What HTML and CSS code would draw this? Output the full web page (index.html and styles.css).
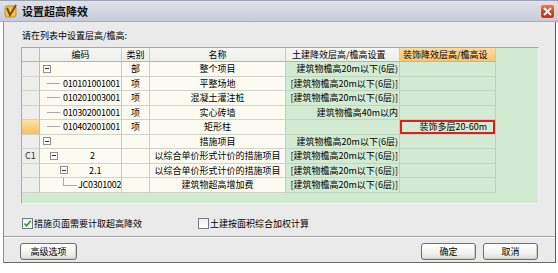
FILE: index.html
```html
<!DOCTYPE html>
<html>
<head>
<meta charset="utf-8">
<link rel="stylesheet" href="styles.css">
</head>
<body>
<div class="dialog">
  <div class="titlebar">
    <svg class="ticon" width="14" height="14" viewBox="0 0 14 14">
      <rect x="1" y="2" width="11" height="11" rx="2" fill="#f3c24a" stroke="#c98d1c"/>
      <path d="M3 4 L6 11 L12 1" fill="none" stroke="#7a4a12" stroke-width="2"/>
    </svg>
    <span class="ttext">设置超高降效</span>
    <span class="tspacer"></span>
    <span class="close">
      <svg width="9" height="9" viewBox="0 0 9 9"><path d="M1 1 L8 8 M8 1 L1 8" stroke="#fff" stroke-width="2"/></svg>
    </span>
  </div>
  <div class="content">
    <div class="label">请在列表中设置层高/檐高:</div>
    <div class="listbox">
      <div class="grid">
        <div class="c hd rh"></div>
        <div class="c hd ctr">编码</div>
        <div class="c hd ctr">类别</div>
        <div class="c hd ctr">名称</div>
        <div class="c hd gh">土建降效层高/檐高设置</div>
        <div class="c hd oh">装饰降效层高/檐高设</div>

        <div class="c rh"></div>
        <div class="c w tree"><span class="ind3"></span><span class="box"></span></div>
        <div class="c w ctr">部</div>
        <div class="c w ctr">整个项目</div>
        <div class="c g r">建筑物檐高20m以下(6层)</div>
        <div class="c g"></div>

        <div class="c rh"></div>
        <div class="c w tree"><span class="ind7"></span><span class="hl"></span><span class="code">010101001001</span></div>
        <div class="c w ctr">项</div>
        <div class="c w ctr">平整场地</div>
        <div class="c g r">[建筑物檐高20m以下(6层)]</div>
        <div class="c g"></div>

        <div class="c rh"></div>
        <div class="c w tree"><span class="ind7"></span><span class="hl"></span><span class="code">010201003001</span></div>
        <div class="c w ctr">项</div>
        <div class="c w ctr">混凝土灌注桩</div>
        <div class="c g r">[建筑物檐高20m以下(6层)]</div>
        <div class="c g"></div>

        <div class="c rh"></div>
        <div class="c w tree"><span class="ind7"></span><span class="hl"></span><span class="code">010302001001</span></div>
        <div class="c w ctr">项</div>
        <div class="c w ctr">实心砖墙</div>
        <div class="c g r">建筑物檐高40m以内</div>
        <div class="c g"></div>

        <div class="c rh sel"></div>
        <div class="c w tree"><span class="ind7"></span><span class="hl"></span><span class="code">010402001001</span></div>
        <div class="c w ctr">项</div>
        <div class="c w ctr">矩形柱</div>
        <div class="c g"></div>
        <div class="c g r redbox">装饰多层20-60m</div>

        <div class="c rh"></div>
        <div class="c w tree"><span class="ind3"></span><span class="box"></span></div>
        <div class="c w"></div>
        <div class="c w ctr">措施项目</div>
        <div class="c g r">建筑物檐高20m以下(6层)</div>
        <div class="c g"></div>

        <div class="c rh rtxt">C1</div>
        <div class="c w tree"><span class="ind10"></span><span class="box"></span><span class="t2">2</span></div>
        <div class="c w"></div>
        <div class="c w ctr">以综合单价形式计价的措施项目</div>
        <div class="c g r">[建筑物檐高20m以下(6层)]</div>
        <div class="c g"></div>

        <div class="c rh"></div>
        <div class="c w tree"><span class="ind20"></span><span class="box"></span><span class="t21">2.1</span></div>
        <div class="c w"></div>
        <div class="c w ctr">以综合单价形式计价的措施项目</div>
        <div class="c g r">[建筑物檐高20m以下(6层)]</div>
        <div class="c g"></div>

        <div class="c rh"></div>
        <div class="c w tree"><span class="ind23"></span><span class="corner"></span><span class="code">JC0301002</span></div>
        <div class="c w"></div>
        <div class="c w ctr">建筑物超高增加费</div>
        <div class="c g r">[建筑物檐高20m以下(6层)]</div>
        <div class="c g"></div>
      </div>
    </div>
    <div class="checks">
      <label class="chk chk1">
        <span class="cbox"><svg width="9" height="9" viewBox="0 0 9 9"><path d="M1.5 4.5 L3.5 6.8 L7.8 1.8" fill="none" stroke="#2a9a2a" stroke-width="1.6"/></svg></span>
        <span>措施页面需要计取超高降效</span>
      </label>
      <label class="chk">
        <span class="cbox"></span>
        <span>土建按面积综合加权计算</span>
      </label>
    </div>
    <div class="sep"></div>
    <div class="buttons">
      <span class="btn wide">高级选项</span>
      <span class="bspacer"></span>
      <span class="btn">确定</span>
      <span class="btn">取消</span>
    </div>
  </div>
</div>
</body>
</html>
```

FILE: styles.css
```css
html, body {
  margin: 0;
  padding: 0;
  background: #ffffff;
}
body {
  width: 558px;
  height: 273px;
  overflow: hidden;
  font-family: "Noto Sans CJK SC", "Noto Sans", sans-serif;
  font-size: 9px;
  color: #000;
}
.dialog {
  display: flex;
  flex-direction: column;
}
.titlebar {
  height: 22px;
  box-sizing: border-box;
  display: flex;
  align-items: center;
  padding: 0 2px 0 4px;
  background: linear-gradient(#dfe2ea, #d5d8e3 45%, #c6cad8);
  border-top: 1px solid #9ea2b0;
  border-bottom: 1px solid #a9adbb;
}
.ticon {
  flex: none;
  margin-right: 4px;
}
.ttext {
  font-size: 11px;
  font-weight: bold;
  color: #111;
  line-height: 12px;
}
.tspacer { flex: 1; }
.close {
  width: 15px;
  height: 15px;
  box-sizing: border-box;
  border: 1px solid #f2d2c8;
  border-radius: 3px;
  background: linear-gradient(#ea7a5c, #d2412a 55%, #c23220);
  display: flex;
  align-items: center;
  justify-content: center;
  margin-right: 1px;
}
.content {
  margin: 0 2px 0 3px;
  background: #ebeaea;
  border-left: 1px solid #8e8e8e;
  border-right: 1px solid #5a5a5a;
  border-bottom: 1px solid #6a6a6a;
  height: 241px;
  box-sizing: border-box;
  display: flex;
  flex-direction: column;
}
.label {
  padding: 8px 0 0 18px;
  line-height: 11px;
  height: 11px;
}
.listbox {
  margin: 6px 0 0 17px;
  width: 518px;
  height: 157px;
  box-sizing: border-box;
  border: 1px solid #a9a9a9;
  border-right-color: #f4f4f4;
  border-bottom-color: #f4f4f4;
  background: #d2ead2;
}
.grid {
  display: grid;
  grid-template-columns: 18px 82px 28px 136px 114px 96px;
  grid-template-rows: 14px;
  grid-auto-rows: 14.5px;
  width: 474px;
}
.c {
  box-sizing: border-box;
  border-right: 1px solid #c9c9c6;
  border-bottom: 1px solid #d2d2cc;
  display: flex;
  align-items: center;
  white-space: nowrap;
  overflow: hidden;
  line-height: 11px;
}
.ctr { justify-content: center; }
.r { justify-content: flex-end; padding-right: 1px; }
.hd {
  background: linear-gradient(#f7f7f5, #eeeeeb);
  border-bottom: 1px solid #b4b4b0;
}
.gh { padding-left: 6px; }
.oh {
  background: linear-gradient(#fddaa0, #f8c474);
  padding-left: 3px;
}
.rh {
  background: #ededeb;
  border-right: 1px solid #bdbdb9;
}
.rh.sel {
  background: linear-gradient(#fde1a4, #f8c05a);
}
.rtxt {
  padding-left: 3px;
  color: #333;
}
.w { background: #fbfbf2; }
.g {
  background: #d3ebd3;
  border-right: 1px solid #b9d3b9;
  border-bottom: 1px solid #bdd6bd;
}
.redbox {
  box-shadow: inset 0 0 0 2px #e31b1b;
  padding-right: 8px;
}
.tree { align-items: center; }
.ind3 { width: 3px; flex: none; }
.ind7 { width: 7px; flex: none; }
.ind10 { width: 10px; flex: none; }
.ind20 { width: 20px; flex: none; }
.ind23 { width: 23px; flex: none; align-self: stretch; }
.box {
  flex: none;
  width: 8px;
  height: 8px;
  box-sizing: border-box;
  border: 1px solid #8f8f8f;
  background: #ffffff;
  display: flex;
  align-items: center;
  justify-content: center;
}
.box::before {
  content: "";
  width: 4px;
  height: 1px;
  background: #333;
}
.hl {
  flex: none;
  width: 13px;
  height: 1px;
  background: #a8a8a8;
  margin-right: 3px;
}
.corner {
  flex: none;
  align-self: flex-start;
  width: 13px;
  height: 7px;
  border-left: 1px solid #a8a8a8;
  border-bottom: 1px solid #a8a8a8;
  margin-right: 1px;
}
.code { letter-spacing: -0.25px; }
.t2 { margin-left: 32px; }
.t21 { margin-left: 21px; }
.checks {
  display: flex;
  align-items: center;
  height: 12px;
  margin-top: 13px;
  padding-left: 18px;
}
.chk {
  display: flex;
  align-items: center;
  line-height: 11px;
}
.chk1 { width: 176px; }
.cbox {
  width: 11px;
  height: 11px;
  box-sizing: border-box;
  border: 1px solid #6f7a86;
  background: linear-gradient(#f0f0f0, #ffffff);
  margin-right: 1px;
  display: flex;
  align-items: center;
  justify-content: center;
}
.sep {
  margin-top: 7px;
  height: 0;
  border-top: 1px solid #a2a2a2;
  border-bottom: 1px solid #fbfbfb;
}
.buttons {
  display: flex;
  margin-top: 5px;
  padding: 0 17px 0 16px;
  gap: 7px;
}
.bspacer { flex: 1; }
.btn {
  width: 55px;
  height: 17px;
  box-sizing: border-box;
  border: 1px solid #6f6f6f;
  border-radius: 3px;
  background: linear-gradient(#ffffff, #f2f2ee 60%, #dcdcd6);
  box-shadow: inset -1px -1px 0 #cfcfca;
  display: flex;
  align-items: center;
  justify-content: center;
  line-height: 11px;
}
.btn.wide { width: 57px; }
```
